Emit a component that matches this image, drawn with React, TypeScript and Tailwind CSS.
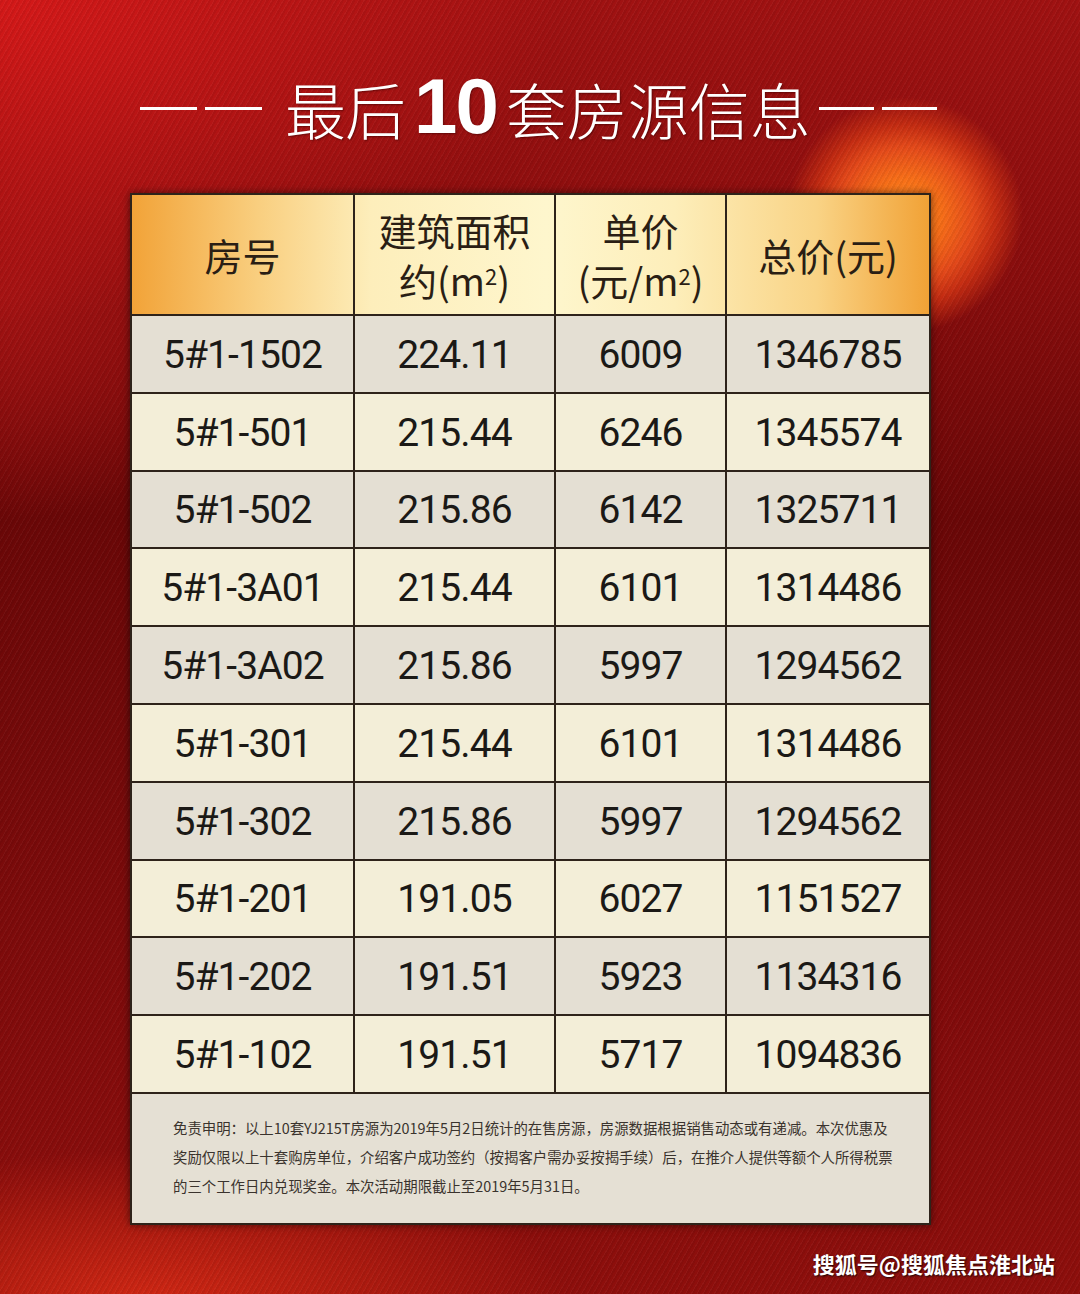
import React from "react";

const rows: string[][] = [
  ["5#1-1502", "224.11", "6009", "1346785"],
  ["5#1-501", "215.44", "6246", "1345574"],
  ["5#1-502", "215.86", "6142", "1325711"],
  ["5#1-3A01", "215.44", "6101", "1314486"],
  ["5#1-3A02", "215.86", "5997", "1294562"],
  ["5#1-301", "215.44", "6101", "1314486"],
  ["5#1-302", "215.86", "5997", "1294562"],
  ["5#1-201", "191.05", "6027", "1151527"],
  ["5#1-202", "191.51", "5923", "1134316"],
  ["5#1-102", "191.51", "5717", "1094836"],
];

export default function App() {
  return (
    <div className="w-[1080px] h-[1294px] overflow-hidden flex flex-col font-['Noto_Sans_CJK_SC',sans-serif] bg-[#7a0a0a] bg-[image:repeating-linear-gradient(120deg,rgba(255,255,255,0.035)_0px,rgba(255,255,255,0.035)_1px,rgba(0,0,0,0.05)_1px,rgba(0,0,0,0.05)_3px,transparent_3px,transparent_5px),radial-gradient(circle_at_905px_215px,#ff8c22_0px,#f87018_35px,#e44a1a_68px,#c42c12_90px,rgba(140,12,10,0)_118px),radial-gradient(ellipse_420px_150px_at_150px_1300px,rgba(210,40,20,0.95),rgba(210,40,20,0)_100%),radial-gradient(ellipse_560px_320px_at_0px_0px,rgba(215,25,25,0.95),rgba(215,25,25,0)_100%),radial-gradient(ellipse_260px_220px_at_0px_300px,rgba(170,20,20,0.8),rgba(170,20,20,0)_100%),linear-gradient(180deg,#a01212_0%,#880d0d_22%,#6a0707_40%,#760a0a_60%,#840c0c_82%,#8e0f0c_100%)]">
      {/* Title */}
      <div className="h-[193px] flex items-center pl-[140px] pt-[24px] text-white [text-shadow:1px_1px_2px_rgba(60,0,0,0.6)]">
        <div className="flex items-center">
          <span aria-hidden className="flex gap-[8px] mr-[23px]">
            <span className="block w-[57px] h-[3px] bg-white" />
            <span className="block w-[57px] h-[3px] bg-white" />
          </span>
          <span className="text-[61px] leading-none font-light tracking-[-1px]">最后</span>
          <span className="font-['Liberation_Sans',sans-serif] font-bold text-[78px] leading-none mx-[9px] tracking-[-2px] -mt-[6px]">10</span>
          <span className="text-[61px] leading-none font-light tracking-[0px]">套房源信息</span>
          <span aria-hidden className="flex gap-[8px] ml-[8px]">
            <span className="block w-[55px] h-[3px] bg-white" />
            <span className="block w-[55px] h-[3px] bg-white" />
          </span>
        </div>
      </div>

      {/* Table */}
      <div className="ml-[130px] w-[801px] border-2 border-[#2e231a] shadow-[0_0_8px_rgba(0,0,0,0.55)]">
        <div className="grid grid-cols-[223px_201px_171px_202px] h-[121px] border-b-2 border-[#2e231a] bg-[linear-gradient(90deg,#f2a338_0%,#f9cf80_16%,#fdeebb_30%,#fef6cd_52%,#fdeeba_68%,#f9d385_86%,#f1a236_100%)] text-[#2a1e14] text-[38px] font-normal">
          <div className="flex items-center justify-center border-r-2 border-[#2e231a] leading-[50px]">房号</div>
          <div className="flex flex-col items-center justify-center border-r-2 border-[#2e231a] leading-[50px]">
            <span>建筑面积</span>
            <span className="flex items-start">
              <span>约(m</span>
              <span className="text-[22px] leading-none mt-[9px]">2</span>
              <span>)</span>
            </span>
          </div>
          <div className="flex flex-col items-center justify-center border-r-2 border-[#2e231a] leading-[50px]">
            <span>单价</span>
            <span className="flex items-start">
              <span>(元/m</span>
              <span className="text-[22px] leading-none mt-[9px]">2</span>
              <span>)</span>
            </span>
          </div>
          <div className="flex items-center justify-center leading-[50px]">总价(元)</div>
        </div>

        {rows.map((r, i) => (
          <div
            key={i}
            className={
              "grid grid-cols-[223px_201px_171px_202px] h-[77.8px] border-b-2 border-[#2e231a] text-[#1b1916] text-[39px] leading-none font-['Roboto','Noto_Sans_CJK_SC',sans-serif] tracking-[-0.9px] " +
              (i % 2 === 0 ? "bg-[#e4dfd3]" : "bg-[#f3eed8]")
            }
          >
            <div className="flex items-center justify-center border-r-2 border-[#2e231a] pt-[3px]">{r[0]}</div>
            <div className="flex items-center justify-center border-r-2 border-[#2e231a] pt-[3px]">{r[1]}</div>
            <div className="flex items-center justify-center border-r-2 border-[#2e231a] pt-[3px]">{r[2]}</div>
            <div className="flex items-center justify-center pt-[3px]">{r[3]}</div>
          </div>
        ))}

        <div className="h-[129px] bg-[#e5e0d4] pl-[41px] pt-[19px] text-[14.4px] leading-[29px] text-[#3a332d]">
          <div className="whitespace-nowrap">免责申明：以上10套YJ215T房源为2019年5月2日统计的在售房源，房源数据根据销售动态或有递减。本次优惠及</div>
          <div className="whitespace-nowrap">奖励仅限以上十套购房单位，介绍客户成功签约（按揭客户需办妥按揭手续）后，在推介人提供等额个人所得税票</div>
          <div className="whitespace-nowrap">的三个工作日内兑现奖金。本次活动期限截止至2019年5月31日。</div>
        </div>
      </div>

      {/* Watermark */}
      <div className="flex justify-end pr-[25px] pt-[27px]">
        <span className="text-white font-bold text-[22px] leading-none [text-shadow:1px_1px_2px_rgba(0,0,0,0.8)]">搜狐号@搜狐焦点淮北站</span>
      </div>
    </div>
  );
}
